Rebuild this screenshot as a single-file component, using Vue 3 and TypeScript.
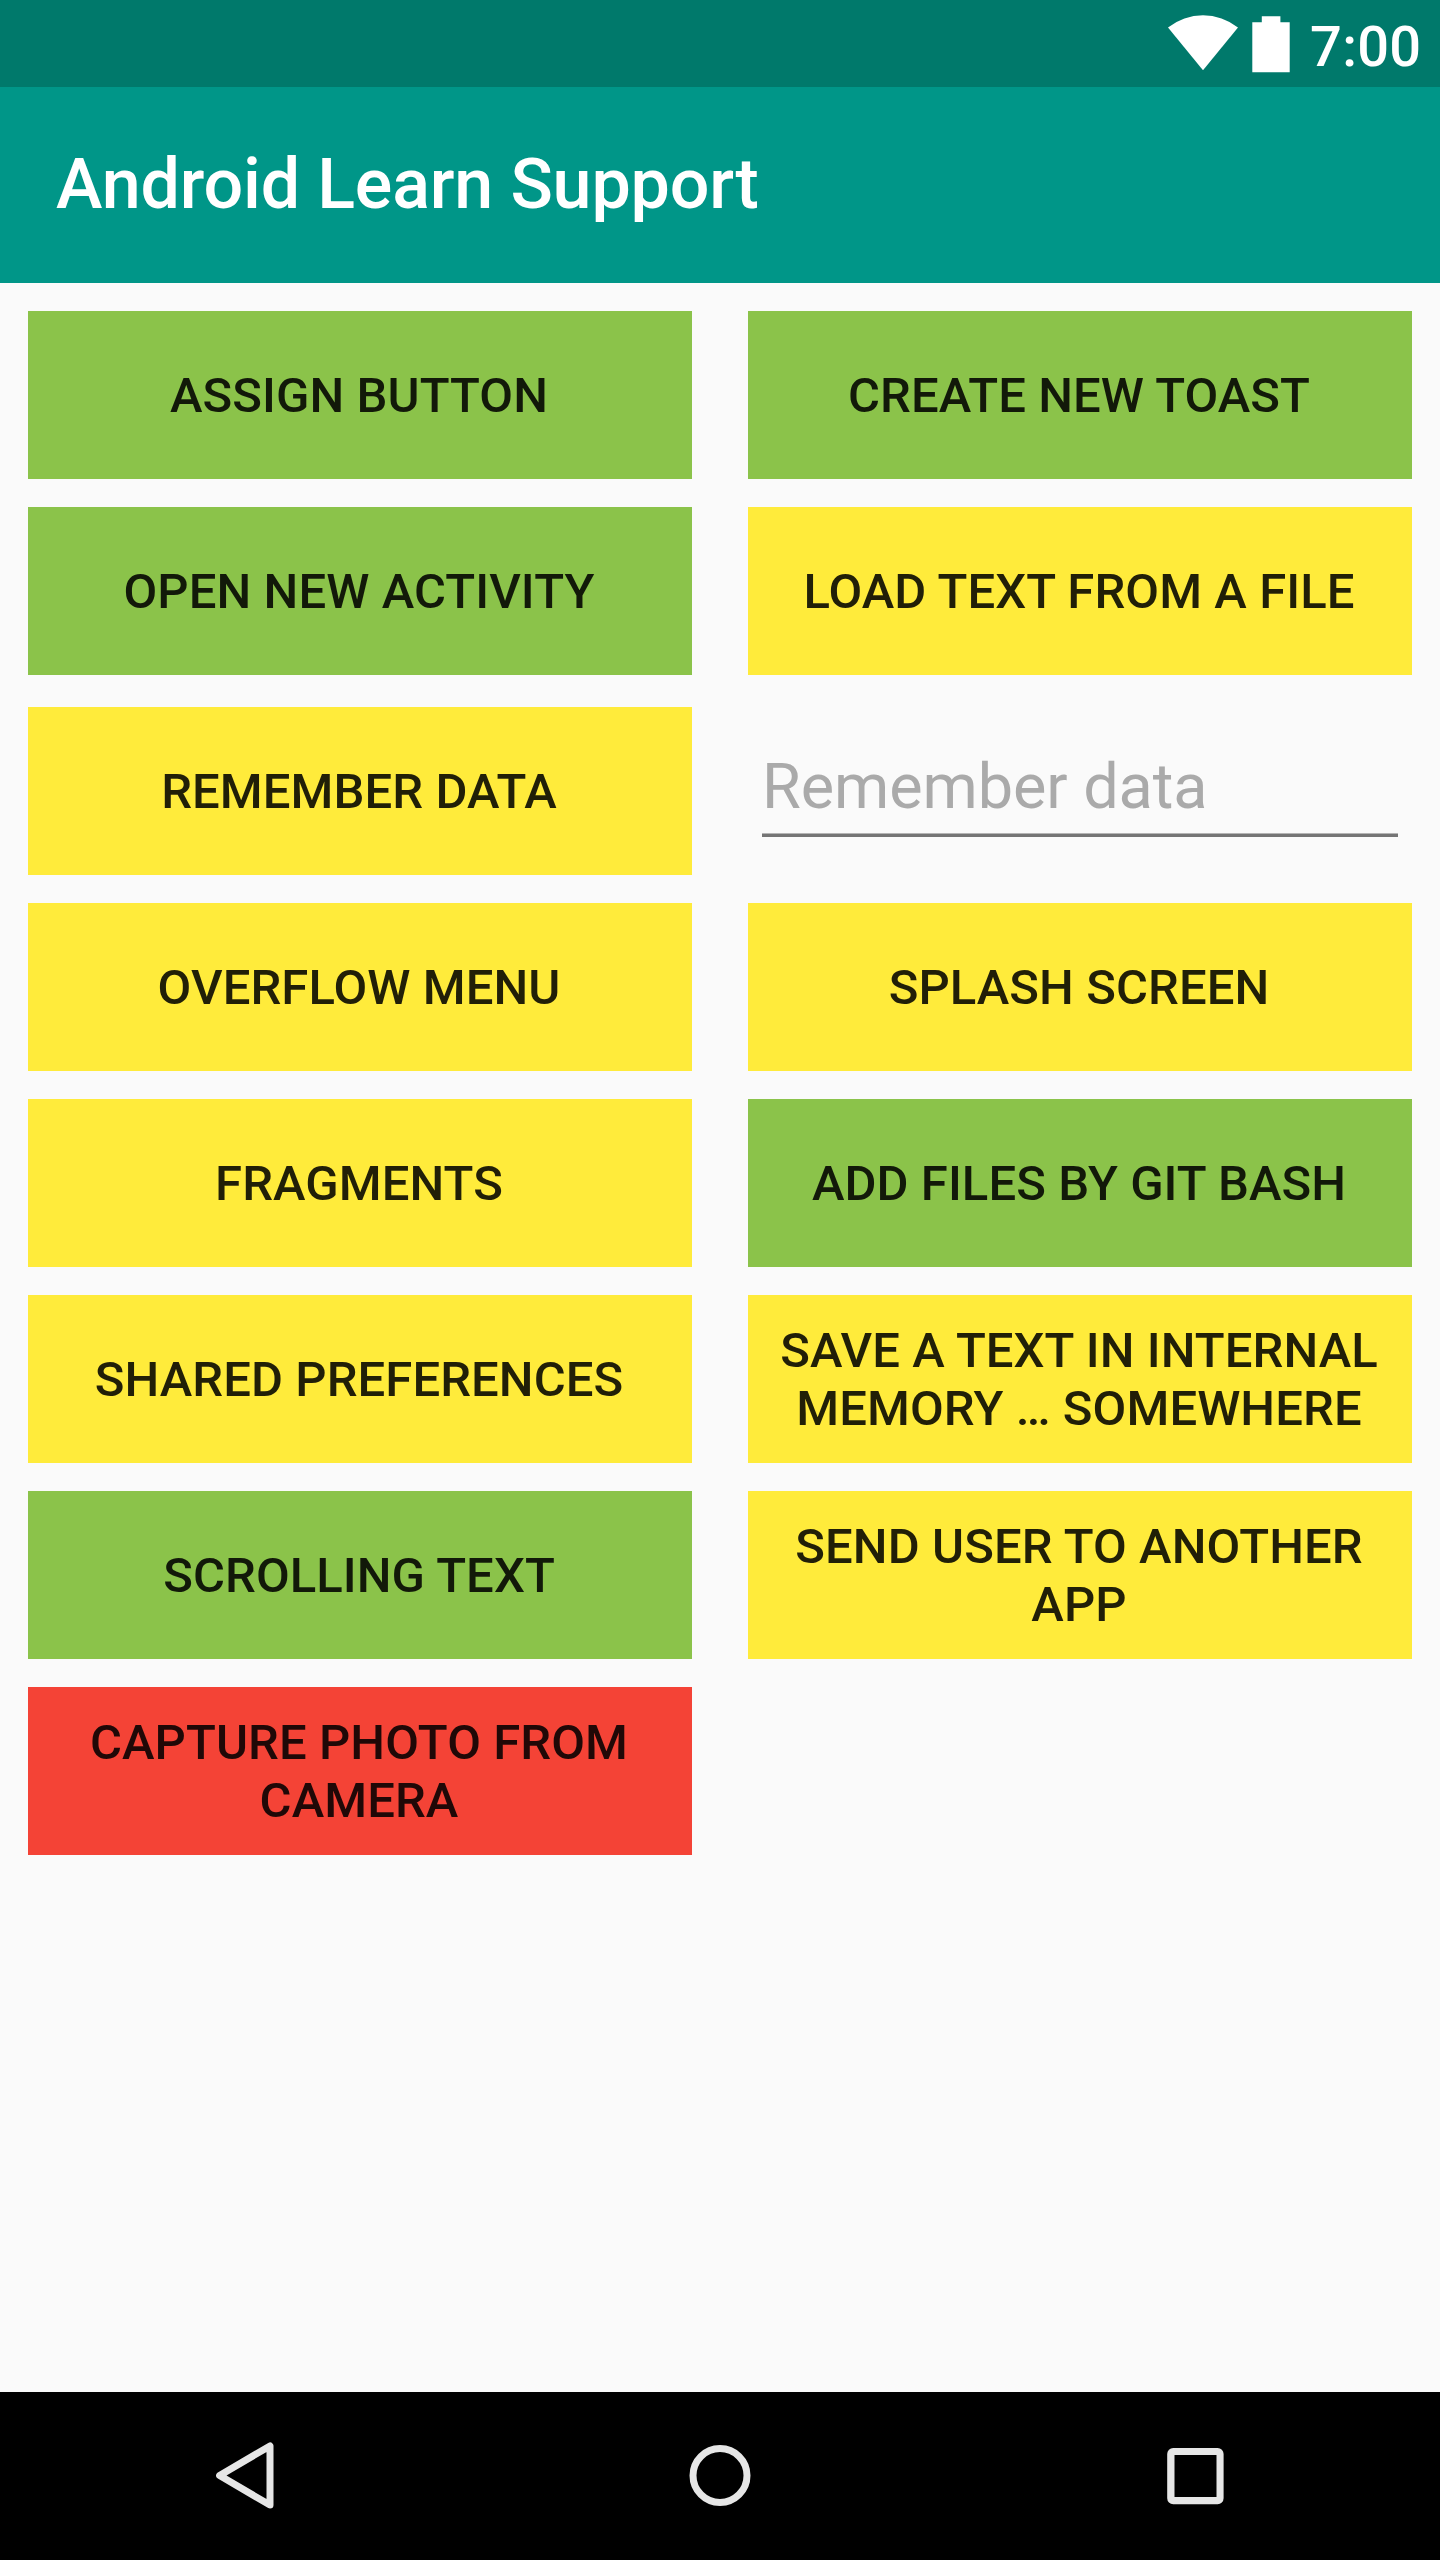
<script setup lang="ts">
type Tone = 'green' | 'yellow' | 'red'

interface Action {
  label: string
  tone: Tone
}

interface Row {
  left: Action
  right?: Action
  hint?: string
}

const rows: Row[] = [
  { left: { label: 'Assign button', tone: 'green' }, right: { label: 'Create new toast', tone: 'green' } },
  { left: { label: 'Open new activity', tone: 'green' }, right: { label: 'Load text from a file', tone: 'yellow' } },
  { left: { label: 'Remember data', tone: 'yellow' }, hint: 'Remember data' },
  { left: { label: 'Overflow menu', tone: 'yellow' }, right: { label: 'Splash screen', tone: 'yellow' } },
  { left: { label: 'Fragments', tone: 'yellow' }, right: { label: 'Add files by git bash', tone: 'green' } },
  {
    left: { label: 'Shared preferences', tone: 'yellow' },
    right: { label: 'Save a text in internal memory … somewhere', tone: 'yellow' },
  },
  { left: { label: 'Scrolling text', tone: 'green' }, right: { label: 'Send user to another app', tone: 'yellow' } },
  { left: { label: 'Capture photo from camera', tone: 'red' } },
]
</script>

<template>
  <div class="screen">
    <header class="status">
      <svg class="wifi" width="70" height="56" viewBox="0 0 70 56" aria-hidden="true">
        <path d="M0 12.5A56.5 56.5 0 0 1 70 12.5L35 55.3Z" fill="#fff" />
      </svg>
      <svg class="battery" width="38" height="58" viewBox="0 0 38 58" aria-hidden="true">
        <path d="M9.8 1.2h18.6v6h9.3v50H.3v-50h9.5z" fill="#fff" />
      </svg>
      <span class="clock">7:00</span>
    </header>

    <div class="toolbar">
      <h1 class="title">Android Learn Support</h1>
    </div>

    <main class="content">
      <div v-for="(row, i) in rows" :key="i" class="row" :class="{ 'row-field': row.hint }">
        <button type="button" class="action" :class="row.left.tone">{{ row.left.label }}</button>
        <button v-if="row.right" type="button" class="action" :class="row.right.tone">{{ row.right.label }}</button>
        <div v-else-if="row.hint" class="field">
          <div class="hint">{{ row.hint }}</div>
        </div>
      </div>
    </main>

    <nav class="navbar">
      <svg width="120" height="168" viewBox="0 0 120 168" aria-label="Back">
        <path d="M85 53.9V113.1L34.6 83.5Z" fill="none" stroke="#e6e6e6" stroke-width="7" stroke-linejoin="round" />
      </svg>
      <svg width="120" height="168" viewBox="0 0 120 168" aria-label="Home">
        <circle cx="60" cy="83.5" r="27" fill="none" stroke="#e6e6e6" stroke-width="7" />
      </svg>
      <svg width="120" height="168" viewBox="0 0 120 168" aria-label="Recent apps">
        <path
          fill="#e6e6e6"
          fill-rule="evenodd"
          d="M38.2 56h44.4a6 6 0 0 1 6 6v44.2a6 6 0 0 1-6 6H38.2a6 6 0 0 1-6-6V62a6 6 0 0 1 6-6zM39.5 63v42h42V63z"
        />
      </svg>
    </nav>
  </div>
</template>

<style>
body {
  margin: 0;
}
</style>

<style scoped>
.screen {
  display: flex;
  flex-direction: column;
  width: 1440px;
  height: 2560px;
  background: #fafafa;
  font-family: Roboto, sans-serif;
  overflow: hidden;
}

.status {
  flex: none;
  display: flex;
  justify-content: flex-end;
  align-items: flex-start;
  box-sizing: border-box;
  height: 87px;
  padding: 15px 18px 0 0;
  background: #00796b;
}

.wifi {
  margin-right: 14px;
}

.battery {
  margin-right: 20px;
}

.clock {
  width: 112px;
  color: #fff;
  font-size: 56px;
  font-weight: 500;
  line-height: 64px;
  letter-spacing: 0.3px;
  white-space: nowrap;
}

.toolbar {
  flex: none;
  display: flex;
  align-items: center;
  box-sizing: border-box;
  height: 196px;
  padding: 0 0 2px 56px;
  background: #009688;
}

.title {
  margin: 0;
  color: #fff;
  font-size: 70px;
  font-weight: 500;
  line-height: 82px;
  letter-spacing: -0.16px;
}

.content {
  flex: 1;
  display: flex;
  flex-direction: column;
  gap: 28px;
  padding: 28px;
}

.row {
  display: grid;
  grid-template-columns: 664px 664px;
  column-gap: 56px;
}

.row-field {
  padding-top: 4px;
}

.action {
  height: 168px;
  padding: 2px 29px 0 27px;
  border: 0;
  color: rgba(0, 0, 0, 0.87);
  font-family: inherit;
  font-size: 49px;
  font-weight: 500;
  line-height: 58px;
  letter-spacing: 0.08px;
  text-align: center;
  text-transform: uppercase;
}

.green {
  background: #8bc34a;
}

.yellow {
  background: #ffeb3b;
}

.red {
  background: #f44336;
}

.field {
  box-sizing: border-box;
  height: 130px;
  margin: 0 14px;
  padding-top: 43px;
  border-bottom: 3px solid #757575;
  box-shadow: inset 0 -1px #b4b4b4;
}

.hint {
  color: #aaa;
  font-size: 63px;
  line-height: 74px;
  letter-spacing: -0.08px;
}

.navbar {
  flex: none;
  display: flex;
  justify-content: center;
  gap: 355px;
  height: 168px;
  background: #000;
}
</style>
